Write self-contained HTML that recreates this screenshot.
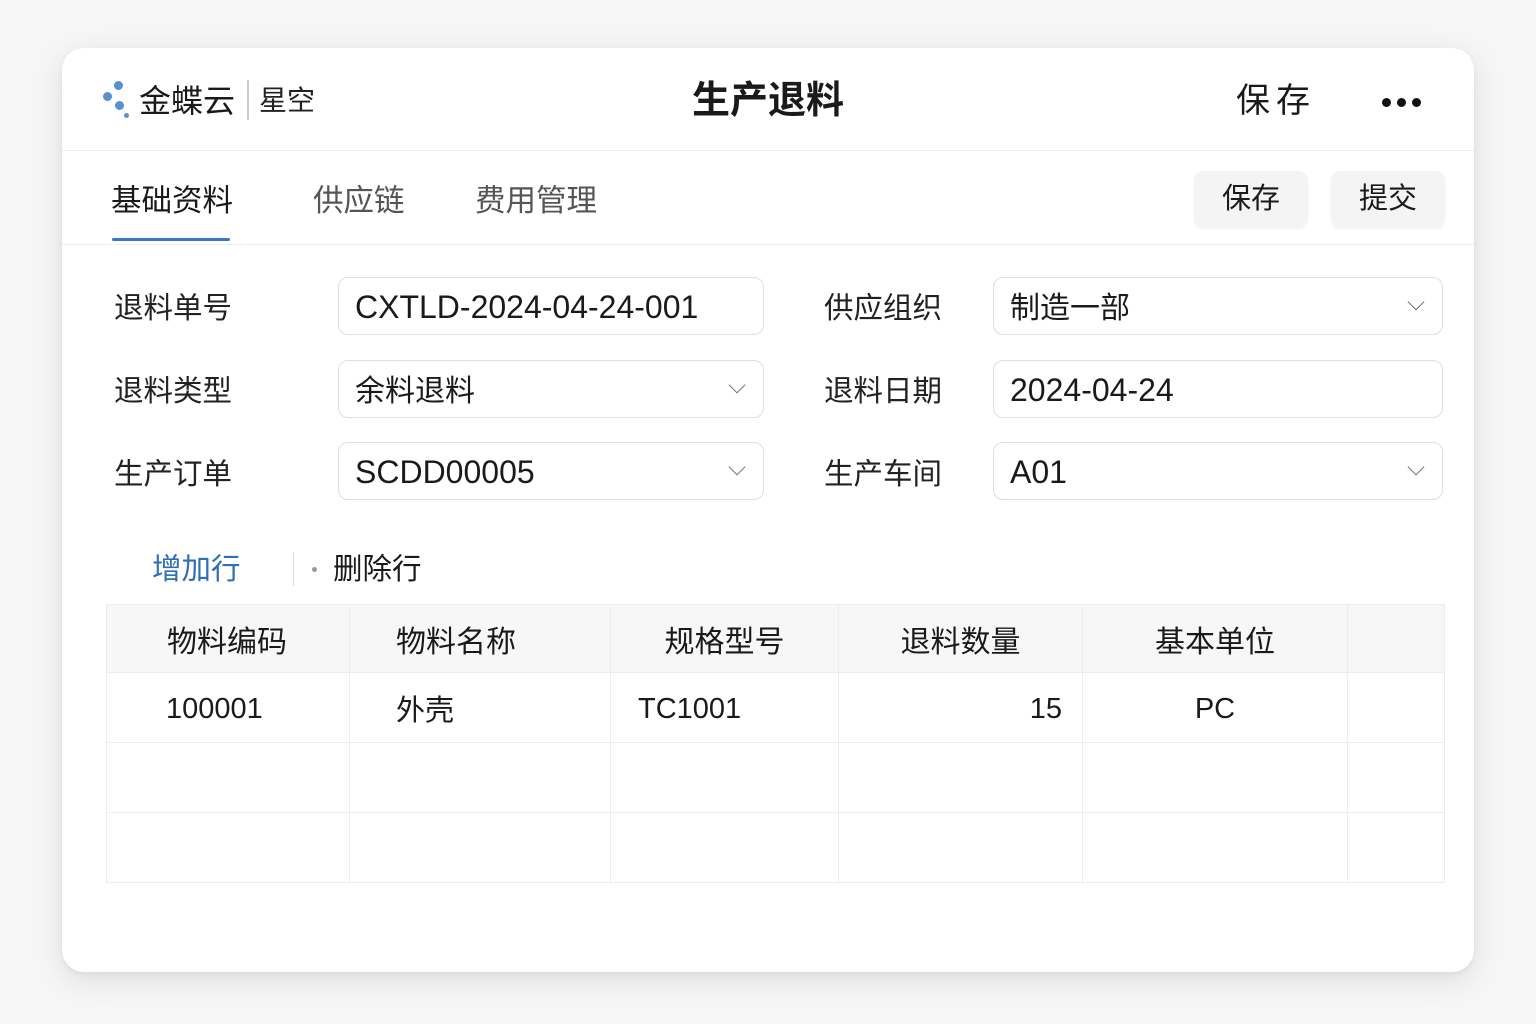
<!DOCTYPE html>
<html><head><meta charset="utf-8">
<style>
*{margin:0;padding:0;box-sizing:border-box}
body{width:1536px;height:1024px;background:#f6f6f6;font-family:"Liberation Sans","Noto Sans CJK SC",sans-serif;color:#1a1a1a;position:relative;overflow:hidden}
.card{position:absolute;left:62px;top:48px;width:1412px;height:924px;background:#fff;border-radius:22px;box-shadow:0 8px 30px rgba(0,0,0,.10),0 2px 6px rgba(0,0,0,.05)}
.a{position:absolute;white-space:nowrap}
.dot{position:absolute;border-radius:50%;background:#5a8fd0}
.hl{position:absolute;left:0;width:1412px;height:1px;background:#ececec}
.lbl{font-size:29.5px;color:#222}
.inp{position:absolute;height:58px;border:1.5px solid #dedede;border-radius:10px;font-size:32px;padding-left:16px;line-height:58px;color:#1a1a1a}
.inp .cn{font-size:30px}
.chev{position:absolute;right:20px;top:18px;width:12px;height:12px;border-right:1.6px solid #777;border-bottom:1.6px solid #777;transform:rotate(45deg)}
.btn{position:absolute;top:123px;height:57px;width:114px;background:#f4f4f4;border-radius:10px;font-size:29px;text-align:center;line-height:57px;box-shadow:0 1px 3px rgba(0,0,0,.05)}
table{position:absolute;left:44px;top:556px;border-collapse:collapse;font-size:29px}
td{border:1px solid #ececec;height:70px;padding:0}
td.l{padding-top:4px}
tr.h td{background:#f7f7f7;height:68px;font-size:30px}
</style></head><body>
<div class="card">
  <div class="dot" style="left:52px;top:33px;width:9px;height:9px"></div>
  <div class="dot" style="left:41px;top:44px;width:9px;height:9px"></div>
  <div class="dot" style="left:53px;top:53px;width:9px;height:9px"></div>
  <div class="dot" style="left:62px;top:65px;width:5px;height:5px"></div>
  <div class="a" style="left:77px;top:33px;font-size:32px;line-height:40px">金蝶云</div>
  <div class="a" style="left:185px;top:32px;width:1.5px;height:40px;background:#ccc"></div>
  <div class="a" style="left:197px;top:35px;font-size:28px;line-height:36px;color:#222">星空</div>
  <div class="a" style="left:0;width:1412px;text-align:center;top:31px;font-size:38px;font-weight:bold;line-height:44px">生产退料</div>
  <div class="a" style="left:1174px;top:33px;font-size:34px;letter-spacing:6px;line-height:40px">保存</div>
  <div class="a" style="left:1320px;top:50px;width:9px;height:9px;border-radius:50%;background:#111;box-shadow:15px 0 0 #111,30px 0 0 #111"></div>
  <div class="hl" style="top:102px"></div>
  <div class="a" style="left:49px;top:133px;font-size:30.5px;line-height:40px">基础资料</div>
  <div class="a" style="left:50px;top:190px;width:118px;height:3px;background:#3a78c2;border-radius:2px"></div>
  <div class="a" style="left:251px;top:133px;font-size:30.5px;line-height:40px;color:#555">供应链</div>
  <div class="a" style="left:413px;top:133px;font-size:30.5px;line-height:40px;color:#555">费用管理</div>
  <div class="btn" style="left:1132px">保存</div>
  <div class="btn" style="left:1269px">提交</div>
  <div class="hl" style="top:196px"></div>

  <div class="a lbl" style="left:52px;top:237px">退料单号</div>
  <div class="inp" style="left:276px;top:229px;width:426px">CXTLD-2024-04-24-001</div>
  <div class="a lbl" style="left:762px;top:237px">供应组织</div>
  <div class="inp" style="left:931px;top:229px;width:450px"><span class="cn">制造一部</span><div class="chev"></div></div>

  <div class="a lbl" style="left:52px;top:320px">退料类型</div>
  <div class="inp" style="left:276px;top:312px;width:426px"><span class="cn">余料退料</span><div class="chev"></div></div>
  <div class="a lbl" style="left:762px;top:320px">退料日期</div>
  <div class="inp" style="left:931px;top:312px;width:450px">2024-04-24</div>

  <div class="a lbl" style="left:52px;top:403px">生产订单</div>
  <div class="inp" style="left:276px;top:394px;width:426px">SCDD00005<div class="chev"></div></div>
  <div class="a lbl" style="left:762px;top:403px">生产车间</div>
  <div class="inp" style="left:931px;top:394px;width:450px">A01<div class="chev"></div></div>

  <div class="a" style="left:90px;top:502px;font-size:29.5px;color:#2f6db5;line-height:40px">增加行</div>
  <div class="a" style="left:231px;top:504px;width:1px;height:34px;background:#ddd"></div>
  <div class="a" style="left:250px;top:519px;width:5px;height:5px;border-radius:50%;background:#999"></div>
  <div class="a" style="left:271px;top:502px;font-size:29.5px;line-height:40px">删除行</div>

  <table>
    <tr class="h"><td style="width:243px;padding-left:60px">物料编码</td><td style="width:261px;padding-left:46px">物料名称</td><td style="width:228px;text-align:center">规格型号</td><td style="width:244px;text-align:center">退料数量</td><td style="width:265px;text-align:center">基本单位</td><td style="width:97px"></td></tr>
    <tr><td class="l" style="padding-left:59px">100001</td><td style="padding-left:46px">外壳</td><td class="l" style="padding-left:27px">TC1001</td><td class="l" style="text-align:right;padding-right:20px">15</td><td class="l" style="text-align:center">PC</td><td></td></tr>
    <tr><td></td><td></td><td></td><td></td><td></td><td></td></tr>
    <tr><td></td><td></td><td></td><td></td><td></td><td></td></tr>
  </table>
</div>
</body></html>
